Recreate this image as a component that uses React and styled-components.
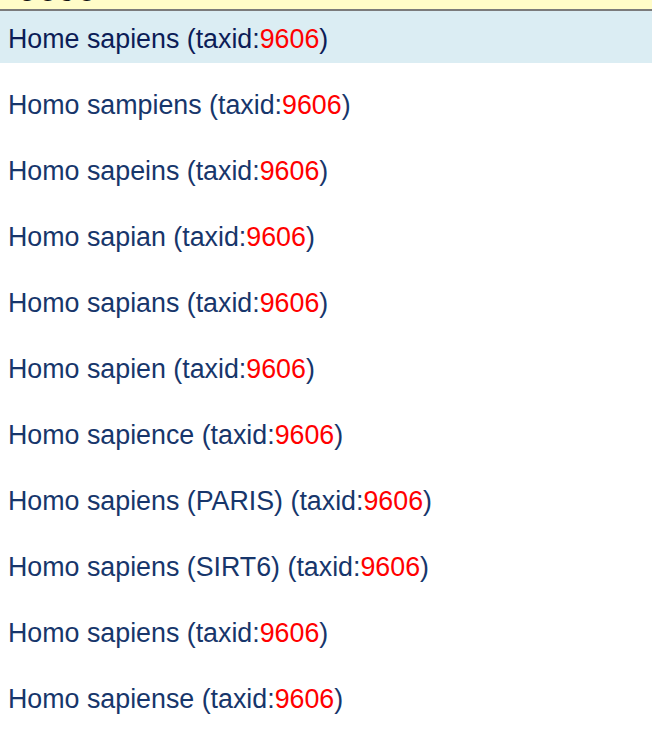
import React from 'react';
import styled, { createGlobalStyle } from 'styled-components';

const GlobalStyle = createGlobalStyle`
  body {
    margin: 0;
    background: #fff;
    font-family: "Liberation Sans", Arial, Helvetica, sans-serif;
  }
`;

const items = [
  { name: 'Home sapiens', id: '9606' },
  { name: 'Homo sampiens', id: '9606' },
  { name: 'Homo sapeins', id: '9606' },
  { name: 'Homo sapian', id: '9606' },
  { name: 'Homo sapians', id: '9606' },
  { name: 'Homo sapien', id: '9606' },
  { name: 'Homo sapience', id: '9606' },
  { name: 'Homo sapiens (PARIS)', id: '9606' },
  { name: 'Homo sapiens (SIRT6)', id: '9606' },
  { name: 'Homo sapiens', id: '9606' },
  { name: 'Homo sapiense', id: '9606' },
];

const App = () => {
  return (
    <>
      <GlobalStyle />
      <SearchBar>
        <span>9606</span>
      </SearchBar>
      <SuggestList>
        {items.map((item, i) => (
          <Suggestion key={i} active={i === 0}>
            {item.name} (taxid:<TaxId>{item.id}</TaxId>)
          </Suggestion>
        ))}
      </SuggestList>
    </>
  );
};

export default App;

const SearchBar = styled.div`
  height: 9px;
  overflow: hidden;
  background: #fffcc8;
  border-bottom: 2px solid #7b7b7b;
  padding-left: 18px;

  span {
    display: block;
    font-size: 35px;
    line-height: 35px;
    margin-top: -29px;
    color: #111;
  }
`;

const SuggestList = styled.ul`
  list-style: none;
  margin: 0;
  padding: 0;
  display: flex;
  flex-direction: column;
  gap: 14px;
`;

const Suggestion = styled.li`
  box-sizing: border-box;
  height: 52px;
  padding: 4px 8px 0;
  line-height: 48px;
  font-size: 26.8px;
  white-space: nowrap;
  color: ${(p) => (p.active ? '#0c1d57' : '#17366b')};
  background: ${(p) => (p.active ? '#dbedf3' : 'transparent')};
`;

const TaxId = styled.span`
  color: #ff0000;
`;
